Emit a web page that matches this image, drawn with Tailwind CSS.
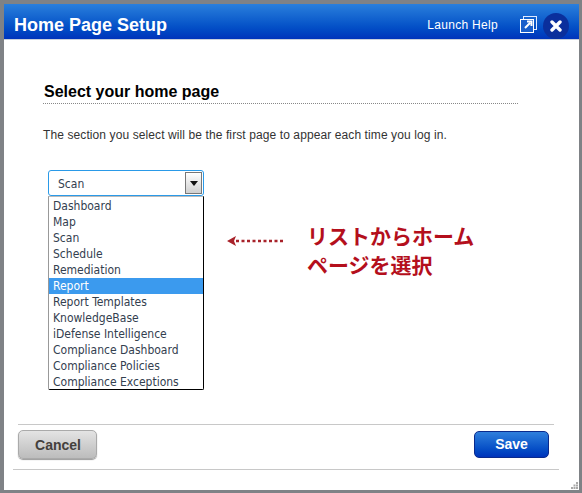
<!DOCTYPE html>
<html lang="ja">
<head>
<meta charset="UTF-8">
<title>Home Page Setup</title>
<script src="https://cdn.jsdelivr.net/npm/@tailwindcss/browser@4"></script>
</head>
<body class="m-0 bg-[#7f8286]">
<div class="w-[582px] h-[493px] overflow-hidden pt-[4px] pl-[4px] pr-[3px] pb-[3px] font-['Liberation_Sans',sans-serif]">
  <div class="relative flex flex-col h-full bg-white">
    <!-- title bar -->
    <div class="flex items-center h-[36px] pt-[7px] pl-[10px] pr-[10px] bg-gradient-to-b from-[#2a7fdc] to-[#0033bb] border-b border-[#c8d0dc] shrink-0">
      <h1 class="text-[18px] font-bold text-white leading-none">Home Page Setup</h1>
      <span class="ml-auto text-[12px] tracking-[0.3px] text-white">Launch Help</span>
      <svg class="ml-[22px] -mt-[1px] w-[17px] h-[17px]" viewBox="0 0 17 17">
        <rect x="3.500" y="0.500" width="13" height="13" fill="none" stroke="#dfeaff"/>
        <rect x="0.500" y="3.500" width="13" height="13" fill="#1a5fcb" stroke="#fff"/>
        <path d="M5 12 L10 7 M7 5.500 H11.500 V10" fill="none" stroke="#fff" stroke-width="2"/>
      </svg>
      <div class="ml-[6px] mt-[2px] w-[26px] h-[26px] rounded-full bg-[#0a2f9c] flex items-center justify-center">
        <svg class="w-[12px] h-[12px]" viewBox="0 0 12 12"><path d="M2 2 L10 10 M10 2 L2 10" stroke="#fff" stroke-width="3.400" stroke-linecap="round"/></svg>
      </div>
    </div>

    <!-- body -->
    <div class="flex-1 pl-[39px] pt-[43px]">
      <h2 class="w-[475px] border-b border-dotted border-[#888] text-[16px] leading-[18px] font-bold text-black pl-px pb-[2px]">Select your home page</h2>
      <p class="mt-[24px] text-[12px] leading-[14px] tracking-[0.1px] text-[#333]">The section you select will be the first page to appear each time you log in.</p>

      <div class="flex mt-[28px] ml-[5px]">
        <div class="w-[156px] font-['DejaVu_Sans_Condensed','DejaVu_Sans',sans-serif] text-[12px] text-[#33404f]">
          <div class="flex h-[26px] items-center pl-[9px] pr-px border border-[#2a9ae8] rounded-[3px]">
            <span class="pt-[2px]">Scan</span>
            <span class="ml-auto w-[17px] h-[22px] border border-[#777] bg-gradient-to-b from-[#fff] to-[#d0d0d0] flex items-center justify-center">
              <svg class="w-[8px] h-[5px]" viewBox="0 0 8 5"><path d="M0 0 H8 L4 5 Z" fill="#111"/></svg>
            </span>
          </div>
          <ul class="h-[194px] pt-[1px] border border-black border-t-[#bbb] border-l-[#999] rounded-b-[2px] leading-[16px]">
            <li class="pl-[4px]">Dashboard</li>
            <li class="pl-[4px]">Map</li>
            <li class="pl-[4px]">Scan</li>
            <li class="pl-[4px]">Schedule</li>
            <li class="pl-[4px]">Remediation</li>
            <li class="pl-[4px] bg-[#3b9aee] text-white">Report</li>
            <li class="pl-[4px]">Report Templates</li>
            <li class="pl-[4px]">KnowledgeBase</li>
            <li class="pl-[4px]">iDefense Intelligence</li>
            <li class="pl-[4px]">Compliance Dashboard</li>
            <li class="pl-[4px]">Compliance Policies</li>
            <li class="pl-[4px]">Compliance Exceptions</li>
          </ul>
        </div>

        <!-- annotation -->
        <svg class="ml-[23px] mt-[64px] w-[58px] h-[14px]" viewBox="0 0 58 14">
          <path d="M0 7 L9 2 L7 7 L9 12 Z" fill="#a8222a"/>
          <path d="M9 7 H57" stroke="#a8222a" stroke-width="2.400" stroke-dasharray="3 2.500"/>
        </svg>
        <p class="ml-[22px] mt-[51px] text-[21px] leading-[29px] font-bold text-[#b40f1c] font-['Noto_Sans_CJK_JP',sans-serif]">リストからホーム<br>ページを選択</p>
      </div>
    </div>

    <!-- footer -->
    <div class="shrink-0 h-[66px] pl-[9px]">
      <div class="flex items-start justify-between w-[536px] ml-[5px] pt-[5px] h-[45px] border-t border-[#c8c8c8]">
        <button class="w-[79px] h-[29px] pt-px pl-px rounded-[5px] border border-[#aaa] bg-gradient-to-b from-[#e4e4e4] to-[#bcbcbc] shadow-[0_1px_1px_#999] text-[14px] font-bold text-[#44403c]">Cancel</button>
        <button class="mr-[5px] mt-px w-[75px] h-[27px] rounded-[5px] border border-[#0a2a8c] bg-gradient-to-b from-[#2f7fdc] to-[#0033bb] text-[14px] font-bold text-white">Save</button>
      </div>
      <div class="w-[546px] border-t border-[#c8c8c8]"></div>
    </div>

    <svg class="absolute right-[1px] bottom-[1px] w-[7px] h-[7px]" viewBox="0 0 7 7"><path d="M5 0h2v2H5zM2.500 2.500h2v2h-2zM5 2.500h2v2H5zM0 5h2v2H0zM2.500 5h2v2h-2zM5 5h2v2H5z" fill="#a8a8a8"/></svg>
  </div>
</div>
</body>
</html>
